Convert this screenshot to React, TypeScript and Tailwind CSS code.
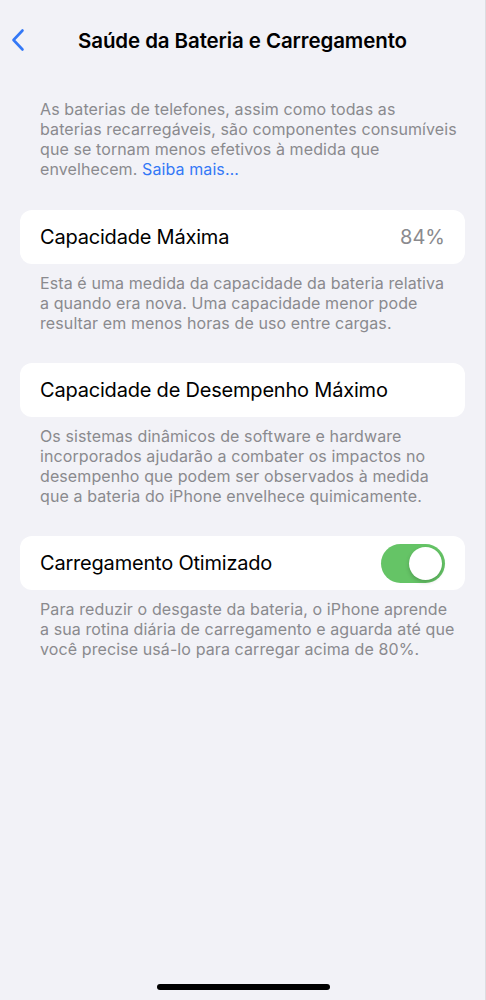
import React from 'react';

const Footer: React.FC<{ lines: string[] }> = ({ lines }) => (
  <p className="pl-5 pt-[9px] text-[16px] leading-5 text-[#8a8a8e] tracking-[0.1px] whitespace-nowrap">
    {lines.map((l, i) => (
      <React.Fragment key={i}>
        {l}
        {i < lines.length - 1 && <br />}
      </React.Fragment>
    ))}
  </p>
);

export default function App() {
  return (
    <div
      className="relative w-[486px] h-[1000px] bg-[#f2f2f7] border-r border-[#dcdce0] overflow-hidden"
      style={{ fontFamily: 'Inter, "Noto Sans", sans-serif' }}
    >
      {/* Nav bar */}
      <div className="relative flex items-center justify-center h-[82px]">
        <svg className="absolute left-[10px] top-[28px] w-[16px] h-[24px]" viewBox="0 0 16 24" fill="none">
          <path d="M12.5 2.5 L3.5 12 L12.5 21.5" stroke="#3478f6" strokeWidth="2.6" strokeLinecap="round" strokeLinejoin="round" />
        </svg>
        <h1 className="text-[20.5px] font-semibold text-black tracking-[-0.1px]">Saúde da Bateria e Carregamento</h1>
      </div>

      <div className="px-5">
        <p className="pl-5 pt-[17px] text-[16px] leading-5 text-[#8a8a8e] tracking-[0.1px] whitespace-nowrap">
          As baterias de telefones, assim como todas as
          <br />
          baterias recarregáveis, são componentes consumíveis
          <br />
          que se tornam menos efetivos à medida que
          <br />
          envelhecem. <span className="text-[#3478f6]">Saiba mais…</span>
        </p>

        <div className="mt-[31px] h-[54px] rounded-xl bg-white flex items-center justify-between px-5">
          <span className="text-[20px] text-black tracking-[-0.2px]">Capacidade Máxima</span>
          <span className="text-[20px] text-[#8a8a8e]">84%</span>
        </div>
        <Footer
          lines={[
            'Esta é uma medida da capacidade da bateria relativa',
            'a quando era nova. Uma capacidade menor pode',
            'resultar em menos horas de uso entre cargas.',
          ]}
        />

        <div className="mt-[30px] h-[54px] rounded-xl bg-white flex items-center px-5">
          <span className="text-[20px] text-black tracking-[-0.2px]">Capacidade de Desempenho Máximo</span>
        </div>
        <Footer
          lines={[
            'Os sistemas dinâmicos de software e hardware',
            'incorporados ajudarão a combater os impactos no',
            'desempenho que podem ser observados à medida',
            'que a bateria do iPhone envelhece quimicamente.',
          ]}
        />

        <div className="mt-[30px] h-[54px] rounded-xl bg-white flex items-center justify-between px-5">
          <span className="text-[20px] text-black tracking-[-0.2px]">Carregamento Otimizado</span>
          <div className="w-[64px] h-[39px] rounded-full bg-[#65c466] p-[3px] flex justify-end">
            <div className="w-[33px] h-[33px] rounded-full bg-white shadow-[0_2px_4px_rgba(0,0,0,0.2)]" />
          </div>
        </div>
        <Footer
          lines={[
            'Para reduzir o desgaste da bateria, o iPhone aprende',
            'a sua rotina diária de carregamento e aguarda até que',
            'você precise usá-lo para carregar acima de 80%.',
          ]}
        />
      </div>

      {/* Home indicator */}
      <div className="absolute bottom-[10px] left-[157px] w-[173px] h-[6px] rounded-full bg-black" />
    </div>
  );
}
